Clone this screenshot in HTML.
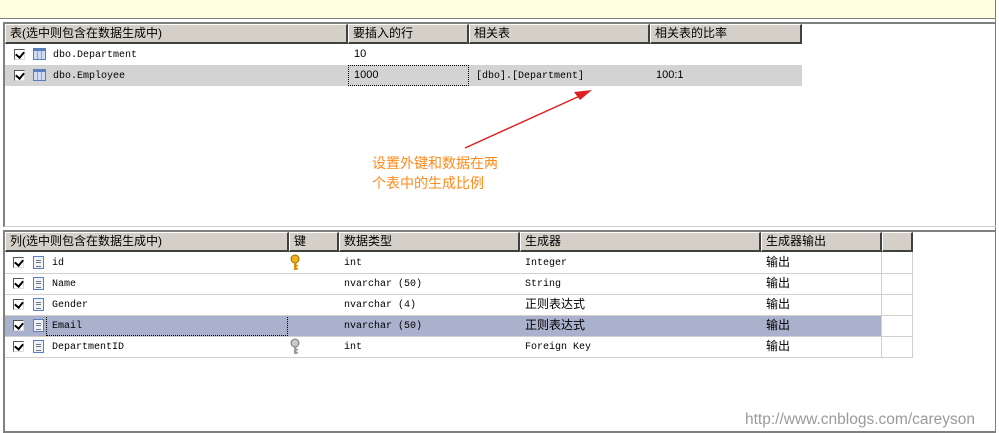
<!DOCTYPE html>
<html><head><meta charset="utf-8"><style>
*{margin:0;padding:0;box-sizing:border-box}
body{width:999px;height:433px;background:#fff;position:relative;overflow:hidden;font-family:"Liberation Sans","Noto Sans CJK SC",sans-serif;font-size:12px;color:#000}
.a{position:absolute}
.hd{position:absolute;background:#d4d0c8;border-top:1px solid #fff;border-left:1px solid #fff;border-right:2px solid #404040;border-bottom:2px solid #404040;padding-left:4px;line-height:17px;font-size:12px;white-space:nowrap;overflow:hidden}
.t{position:absolute;line-height:21px;white-space:nowrap}
.m{font-family:"Liberation Mono",monospace;font-size:10px;line-height:12px;padding-top:6px;color:#000}
.n{font-size:11px}
.cb{position:absolute;width:11px;height:11px;border:1px solid #555;border-right-color:#ddd;border-bottom-color:#ddd;background:#fff}
.cb:after{content:"";position:absolute;left:2px;top:0px;width:4px;height:6px;border-right:2px solid #000;border-bottom:2px solid #000;transform:rotate(40deg)}
.ti{position:absolute;width:13px;height:12px;border:1px solid #5a7fc0;background:repeating-linear-gradient(90deg,#cfdcf3 0 3px,#8aa6d6 3px 4px);}
.ti:before{content:"";position:absolute;left:0;right:0;top:0;height:2px;background:#5a7fc0}
.ci{position:absolute;width:11px;height:13px;border:1px solid #5a7fc0;background:#eef3fb}
.ci:before{content:"";position:absolute;left:2px;right:2px;top:3px;height:5px;border-top:1px solid #777;border-bottom:1px solid #777}
.ci:after{content:"";position:absolute;left:2px;right:2px;top:5px;height:1px;background:#777}
.line{position:absolute;height:1px;background:#d4d0c8}
.vl{position:absolute;width:1px;background:#d4d0c8}
</style></head><body>
<div class="a" style="left:0;top:0;width:999px;height:19px;background:#ffffe0;border-bottom:1px solid #808080"></div>
<div class="a" style="left:995px;top:0;width:4px;height:433px;background:#fff;border-left:1px solid #808080"></div>
<div class="a" style="left:3px;top:22px;width:993px;height:205px;border-top:2px solid #808080;border-left:2px solid #808080;border-bottom:1px solid #ccc"></div>
<div class="hd" style="left:5px;top:24px;width:343px;height:20px">表(选中则包含在数据生成中)</div>
<div class="hd" style="left:348px;top:24px;width:121px;height:20px">要插入的行</div>
<div class="hd" style="left:469px;top:24px;width:181px;height:20px">相关表</div>
<div class="hd" style="left:650px;top:24px;width:152px;height:20px">相关表的比率</div>
<div class="a" style="left:5px;top:65px;width:797px;height:21px;background:#d3d3d3"></div>
<div class="a" style="left:348px;top:65px;width:121px;height:21px;border:1px dotted #000"></div>
<div class="cb" style="left:14px;top:49px"></div><div class="ti" style="left:33px;top:48px"></div>
<div class="t m" style="left:53px;top:44px">dbo.Department</div>
<div class="t n" style="left:354px;top:44px">10</div>
<div class="cb" style="left:14px;top:70px"></div><div class="ti" style="left:33px;top:69px"></div>
<div class="t m" style="left:53px;top:65px">dbo.Employee</div>
<div class="t n" style="left:354px;top:65px">1000</div>
<div class="t m" style="left:476px;top:65px">[dbo].[Department]</div>
<div class="t n" style="left:656px;top:65px">100:1</div>
<svg class="a" style="left:0;top:0" width="999" height="433"><line x1="465" y1="148" x2="582" y2="95" stroke="#e02020" stroke-width="1.5"/><polygon points="592,90 574,92 580,100" fill="#e02020"/></svg>
<div class="a" style="left:372px;top:153px;color:#ff8a1a;font-size:14px;line-height:20px;font-family:'Noto Sans CJK SC',sans-serif">设置外键和数据在两<br>个表中的生成比例</div>
<div class="a" style="left:3px;top:230px;width:993px;height:203px;border-top:2px solid #808080;border-left:2px solid #808080;border-bottom:2px solid #808080"></div>
<div class="hd" style="left:5px;top:232px;width:284px;height:20px">列(选中则包含在数据生成中)</div>
<div class="hd" style="left:289px;top:232px;width:50px;height:20px">键</div>
<div class="hd" style="left:339px;top:232px;width:181px;height:20px">数据类型</div>
<div class="hd" style="left:520px;top:232px;width:241px;height:20px">生成器</div>
<div class="hd" style="left:761px;top:232px;width:121px;height:20px">生成器输出</div>
<div class="hd" style="left:882px;top:232px;width:31px;height:20px"></div>
<div class="a" style="left:5px;top:315px;width:876px;height:21px;background:#a9b1cc"></div>
<div class="a" style="left:46px;top:315px;width:242px;height:21px;border:1px dotted #000"></div>
<div class="line" style="left:5px;top:273px;width:908px"></div>
<div class="line" style="left:5px;top:294px;width:908px"></div>
<div class="line" style="left:5px;top:315px;width:908px"></div>
<div class="line" style="left:5px;top:336px;width:908px"></div>
<div class="line" style="left:5px;top:357px;width:908px"></div>
<div class="vl" style="left:881px;top:252px;height:106px"></div>
<div class="vl" style="left:912px;top:252px;height:106px"></div>
<div class="cb" style="left:13px;top:257px"></div><div class="ci" style="left:33px;top:256px"></div>
<div class="cb" style="left:13px;top:278px"></div><div class="ci" style="left:33px;top:277px"></div>
<div class="cb" style="left:13px;top:299px"></div><div class="ci" style="left:33px;top:298px"></div>
<div class="cb" style="left:13px;top:320px"></div><div class="ci" style="left:33px;top:319px"></div>
<div class="cb" style="left:13px;top:341px"></div><div class="ci" style="left:33px;top:340px"></div>
<svg class="a" style="left:290px;top:254px" width="12" height="18"><circle cx="5" cy="5" r="4" fill="#f0b020" stroke="#a06a00"/><rect x="4" y="8" width="2.5" height="8" fill="#d49000"/><rect x="6" y="11" width="2" height="1.5" fill="#d49000"/><rect x="6" y="14" width="2" height="1.5" fill="#d49000"/></svg>
<svg class="a" style="left:290px;top:338px" width="12" height="18"><circle cx="5" cy="5" r="4" fill="#c8c8c8" stroke="#777"/><rect x="4" y="8" width="2.5" height="8" fill="#999"/><rect x="6" y="11" width="2" height="1.5" fill="#999"/><rect x="6" y="14" width="2" height="1.5" fill="#999"/></svg>
<div class="t m" style="left:52px;top:252px">id</div><div class="t m" style="left:344px;top:252px">int</div><div class="t m" style="left:525px;top:252px">Integer</div><div class="t" style="left:766px;top:252px">输出</div>
<div class="t m" style="left:52px;top:273px">Name</div><div class="t m" style="left:344px;top:273px">nvarchar (50)</div><div class="t m" style="left:525px;top:273px">String</div><div class="t" style="left:766px;top:273px">输出</div>
<div class="t m" style="left:52px;top:294px">Gender</div><div class="t m" style="left:344px;top:294px">nvarchar (4)</div><div class="t" style="left:525px;top:294px">正则表达式</div><div class="t" style="left:766px;top:294px">输出</div>
<div class="t m" style="left:52px;top:315px">Email</div><div class="t m" style="left:344px;top:315px">nvarchar (50)</div><div class="t" style="left:525px;top:315px">正则表达式</div><div class="t" style="left:766px;top:315px">输出</div>
<div class="t m" style="left:52px;top:336px">DepartmentID</div><div class="t m" style="left:344px;top:336px">int</div><div class="t m" style="left:525px;top:336px">Foreign Key</div><div class="t" style="left:766px;top:336px">输出</div>
<div class="a" style="left:745px;top:410px;color:#9a9a9a;font-size:15.5px;line-height:20px">http://www.cnblogs.com/careyson</div>
</body></html>
